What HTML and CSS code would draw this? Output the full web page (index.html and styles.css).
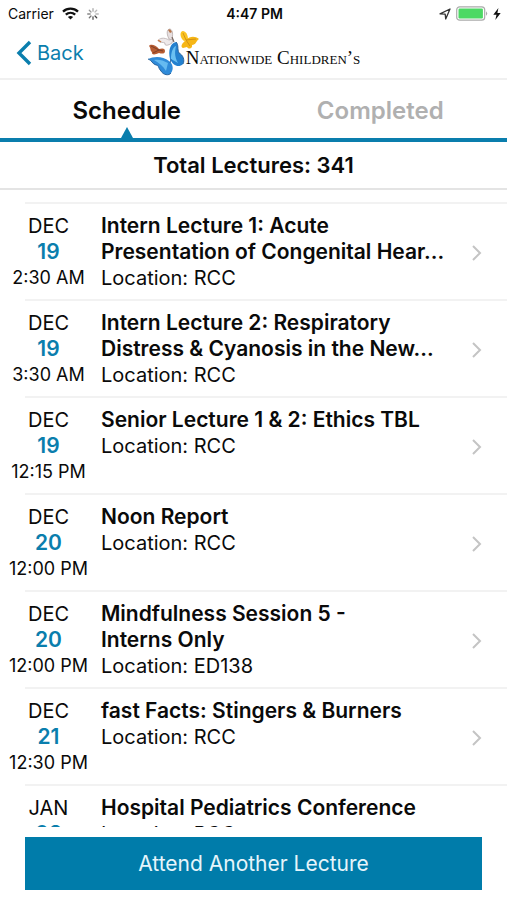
FILE: index.html
```html
<!DOCTYPE html>
<html lang="en">
<head>
  <meta charset="UTF-8">
  <meta name="viewport" content="width=device-width, initial-scale=1.0">
  <title>Schedule - Nationwide Children's</title>
  <link rel="stylesheet" href="styles.css">
</head>
<body>

  <!-- Phone status bar -->
  <div class="status-bar">
    <div class="status-left">
      <span>Carrier</span>
      <svg width="17" height="13" viewBox="0 0 17 13" aria-hidden="true">
        <g fill="none" stroke="#111" stroke-width="2.3">
          <path d="M1 4.700C5.200 .7 11.800 .7 16 4.700"/>
          <path d="M3.800 7.700C6.500 5.200 10.500 5.200 13.200 7.700"/>
        </g>
        <path d="M8.500 12.500L5.900 9.900C7.400 8.600 9.600 8.600 11.100 9.900Z" fill="#111"/>
      </svg>
      <svg width="12" height="12" viewBox="0 0 12 12" aria-hidden="true">
        <g stroke-width="1.300" stroke-linecap="round">
          <path d="M6 .7V3.200" stroke="#aaa"/>
          <path d="M9.700 2.300L8 4" stroke="#bbb"/>
          <path d="M11.300 6H8.800" stroke="#bbb"/>
          <path d="M9.700 9.700L8 8" stroke="#444"/>
          <path d="M6 11.300V8.800" stroke="#555"/>
          <path d="M2.300 9.700L4 8" stroke="#777"/>
          <path d="M.7 6H3.200" stroke="#888"/>
          <path d="M2.300 2.300L4 4" stroke="#999"/>
        </g>
      </svg>
    </div>
    <div class="status-time">4:47 PM</div>
    <div class="status-right">
      <svg width="12" height="12" viewBox="0 0 12 12" aria-hidden="true">
        <path d="M1 5.800L11 1L6.700 11L6.200 6.200Z" fill="none" stroke="#333" stroke-width="1.300" stroke-linejoin="round"/>
      </svg>
      <svg width="32" height="15" viewBox="0 0 32 15" aria-hidden="true">
        <rect x=".7" y=".8" width="28" height="13.400" rx="3" fill="#fff" stroke="#aaa" stroke-width="1.200"/>
        <rect x="2.500" y="2.600" width="24.400" height="9.800" rx="1.200" fill="#4cd964"/>
        <path d="M30 5.200Q32.400 7.500 30 9.800Z" fill="#aaa"/>
      </svg>
      <svg width="8" height="12" viewBox="0 0 8 12" aria-hidden="true">
        <path d="M5.400 0L.3 6.700H3.500L2.300 12L7.700 4.900H4.400Z" fill="#111"/>
      </svg>
    </div>
  </div>

  <!-- Navigation bar with logo -->
  <header class="nav-bar">
    <a class="back" href="#">
      <svg width="16" height="26" viewBox="0 0 16 26" aria-hidden="true">
        <path d="M14 2L3 13L14 24" fill="none" stroke="#0a7ead" stroke-width="3.400"/>
      </svg>
      Back
    </a>
    <div class="logo">
      <svg width="54" height="50" viewBox="0 0 54 50" aria-hidden="true">
        <!-- white butterfly -->
        <path d="M22 11C19 5 20 1 23 1C26 2 26 7 25 12Z" fill="#e6dfe0" stroke="#b5aaa8" stroke-width=".8"/>
        <path d="M22 12C17 9 12 10 11 13C14 15 16 14 18 15C17 18 21 18 25 15L26 11Z" fill="#eee9ea" stroke="#b9afb0" stroke-width=".8"/>
        <path d="M21 2Q23 0 25 4L23 5Z" fill="#b7764c"/>
        <path d="M25 9L27 14" stroke="#7b6a62" stroke-width="1.200"/>
        <path d="M11 12L14 14" stroke="#c87a42" stroke-width="1.500"/>
        <!-- yellow butterfly -->
        <path d="M37 13C32 9 33 3 36 3C40 4 41 8 41 12Z" fill="#fbc321"/>
        <path d="M39 12C43 8 48 8 52 11C49 13 49 17 45 17C46 20 42 22 40 19L36 20C33 19 35 15 39 12Z" fill="#f6b616"/>
        <path d="M36 5L39 12L49 11M39 12L43 18" fill="none" stroke="#c98812" stroke-width=".8"/>
        <!-- orange butterfly -->
        <path d="M12 21C8 16 3 16 2 18C4 20 3 23 5 24C4 27 8 27 12 25C15 26 18 26 18 23C18 20 15 20 12 21Z" fill="#b75c32"/>
        <path d="M4 18L12 22L6 25M12 22L16 23" fill="none" stroke="#6e3827" stroke-width=".8"/>
        <!-- blue butterfly -->
        <path d="M23 31C21 23 23 15 29 14C32 17 30 21 32 25C36 27 38 32 36 36C32 40 26 38 23 31Z" fill="#2481cf"/>
        <path d="M22 33C16 28 7 28 1 31C5 32 5 36 9 37C12 37 11 40 14 43C16 47 22 48 24 45C27 41 26 36 22 33Z" fill="#2f8bd9"/>
        <path d="M24 31C24 24 26 19 29 18C28 23 27 28 31 35Z" fill="#6ac0f1"/>
        <path d="M21 35C16 32 11 31 7 32C12 35 16 38 19 43Z" fill="#65baf0"/>
        <path d="M24 31L23 35M29 14C32 17 30 21 32 25C36 27 38 32 36 36M1 31C5 32 5 36 9 37C12 37 11 40 14 43C16 47 22 48 24 45" fill="none" stroke="#205a94" stroke-width=".9"/>
      </svg>
      <span class="logo-text">Nationwide Children’s</span>
    </div>
  </header>

  <nav class="tabs">
    <a class="tab active" href="#">Schedule</a>
    <a class="tab" href="#">Completed</a>
  </nav>

  <h1 class="total">Total Lectures: 341</h1>

  <!-- Lecture list -->
  <ul class="lectures">
    <li>
      <a class="lecture" href="#">
        <span class="date">DEC <b>19</b> <small>2:30 AM</small></span>
        <span class="info"><strong>Intern Lecture 1: Acute Presentation of Congenital Hear...</strong> <span>Location: RCC</span></span>
        <svg class="chevron" width="12" height="18" viewBox="0 0 12 18" aria-hidden="true"><path d="M2 2L9 9L2 16"/></svg>
      </a>
    </li>
    <li>
      <a class="lecture" href="#">
        <span class="date">DEC <b>19</b> <small>3:30 AM</small></span>
        <span class="info"><strong>Intern Lecture 2: Respiratory Distress &amp; Cyanosis in the New...</strong> <span>Location: RCC</span></span>
        <svg class="chevron" width="12" height="18" viewBox="0 0 12 18" aria-hidden="true"><path d="M2 2L9 9L2 16"/></svg>
      </a>
    </li>
    <li>
      <a class="lecture" href="#">
        <span class="date">DEC <b>19</b> <small>12:15 PM</small></span>
        <span class="info"><strong>Senior Lecture 1 &amp; 2: Ethics TBL</strong> <span>Location: RCC</span></span>
        <svg class="chevron" width="12" height="18" viewBox="0 0 12 18" aria-hidden="true"><path d="M2 2L9 9L2 16"/></svg>
      </a>
    </li>
    <li>
      <a class="lecture" href="#">
        <span class="date">DEC <b>20</b> <small>12:00 PM</small></span>
        <span class="info"><strong>Noon Report</strong> <span>Location: RCC</span></span>
        <svg class="chevron" width="12" height="18" viewBox="0 0 12 18" aria-hidden="true"><path d="M2 2L9 9L2 16"/></svg>
      </a>
    </li>
    <li>
      <a class="lecture" href="#">
        <span class="date">DEC <b>20</b> <small>12:00 PM</small></span>
        <span class="info"><strong>Mindfulness Session 5 -<br>Interns Only</strong> <span>Location: ED138</span></span>
        <svg class="chevron" width="12" height="18" viewBox="0 0 12 18" aria-hidden="true"><path d="M2 2L9 9L2 16"/></svg>
      </a>
    </li>
    <li>
      <a class="lecture" href="#">
        <span class="date">DEC <b>21</b> <small>12:30 PM</small></span>
        <span class="info"><strong>fast Facts: Stingers &amp; Burners</strong> <span>Location: RCC</span></span>
        <svg class="chevron" width="12" height="18" viewBox="0 0 12 18" aria-hidden="true"><path d="M2 2L9 9L2 16"/></svg>
      </a>
    </li>
    <li>
      <a class="lecture" href="#">
        <span class="date">JAN <b>02</b></span>
        <span class="info"><strong>Hospital Pediatrics Conference</strong> <span>Location: RCC</span></span>
        <svg class="chevron" width="12" height="18" viewBox="0 0 12 18" aria-hidden="true"><path d="M2 2L9 9L2 16"/></svg>
      </a>
    </li>
  </ul>

  <footer class="footer">
    <button class="attend" type="button">Attend Another Lecture</button>
  </footer>

</body>
</html>
```
FILE: styles.css
```css
* {
  box-sizing: border-box;
}

body {
  margin: 0;
  height: 100vh;
  display: flex;
  flex-direction: column;
  overflow: hidden;
  background: #fff;
  color: #0a0a0a;
  font-family: Inter, "Liberation Sans", sans-serif;
  font-size: 20px;
  line-height: 26px;
}

a {
  color: inherit;
  text-decoration: none;
}

svg {
  flex-shrink: 0;
}

/* Status bar */
.status-bar {
  display: grid;
  grid-template-columns: 1fr auto 1fr;
  align-items: center;
  height: 27px;
  padding: 0 6px 0 8px;
  font-size: 14px;
  flex-shrink: 0;
}

.status-left,
.status-right {
  display: flex;
  align-items: center;
  gap: 8px;
}

.status-right {
  justify-content: flex-end;
  gap: 5px;
}

.status-time {
  font-weight: 600;
}

/* Navigation bar */
.nav-bar {
  display: grid;
  grid-template-columns: 1fr auto 1fr;
  align-items: center;
  height: 53px;
  padding: 0 16px;
  border-bottom: 2px solid #f0f0f0;
  flex-shrink: 0;
}

.back {
  display: flex;
  align-items: center;
  gap: 5px;
  color: #0a7ead;
}

.logo {
  display: flex;
  align-items: center;
}

.logo-text {
  margin: 10px 0 0 -15px;
  font-family: "Liberation Serif", serif;
  font-size: 19px;
  line-height: 20px;
  font-variant: small-caps;
}

/* Tabs */
.tabs {
  display: grid;
  grid-template-columns: 1fr 1fr;
  height: 62px;
  border-bottom: 4px solid #0a7ead;
  flex-shrink: 0;
}

.tab {
  position: relative;
  padding-top: 18px;
  text-align: center;
  font-size: 24px;
  font-weight: 600;
  color: #b0b0b0;
}

.tab.active {
  color: #0a0a0a;
}

.tab.active::after {
  content: "";
  position: absolute;
  left: 50%;
  bottom: 0;
  transform: translateX(-50%);
  border: 6px solid transparent;
  border-top: 0;
  border-bottom: 11px solid #0a7ead;
}

.total {
  margin: 0;
  padding: 10px 0;
  border-bottom: 2px solid #e4e4e4;
  text-align: center;
  font-size: 22px;
  line-height: 26px;
  font-weight: 600;
  flex-shrink: 0;
}

/* Lecture list */
.lectures {
  flex: 1;
  min-height: 0;
  margin: 0;
  padding: 12px 0 0 25px;
  list-style: none;
  overflow: hidden;
}

.lecture {
  display: flex;
  height: 97px;
  padding: 9px 24px 0 0;
  border-top: 2px solid #f2f2f2;
}

.date {
  display: flex;
  flex-direction: column;
  align-items: center;
  width: 97px;
  margin: 0 4px 0 -25px;
  flex-shrink: 0;
}

.date b {
  color: #0a7ead;
  font-size: 21px;
  font-weight: 600;
}

.date small {
  font-size: 18px;
}

.info {
  flex: 1;
  min-width: 0;
  padding-right: 12px;
}

.info strong {
  display: block;
  font-size: 21px;
  font-weight: 600;
}

.chevron {
  margin-top: 31px;
  fill: none;
  stroke: #c4c4c4;
  stroke-width: 2;
}

/* Bottom button */
.footer {
  padding: 10px 25px;
  flex-shrink: 0;
}

.attend {
  display: block;
  width: 100%;
  height: 53px;
  border: 0;
  background: #007caa;
  color: #e6f5fb;
  font-family: inherit;
  font-size: 21px;
}
```
